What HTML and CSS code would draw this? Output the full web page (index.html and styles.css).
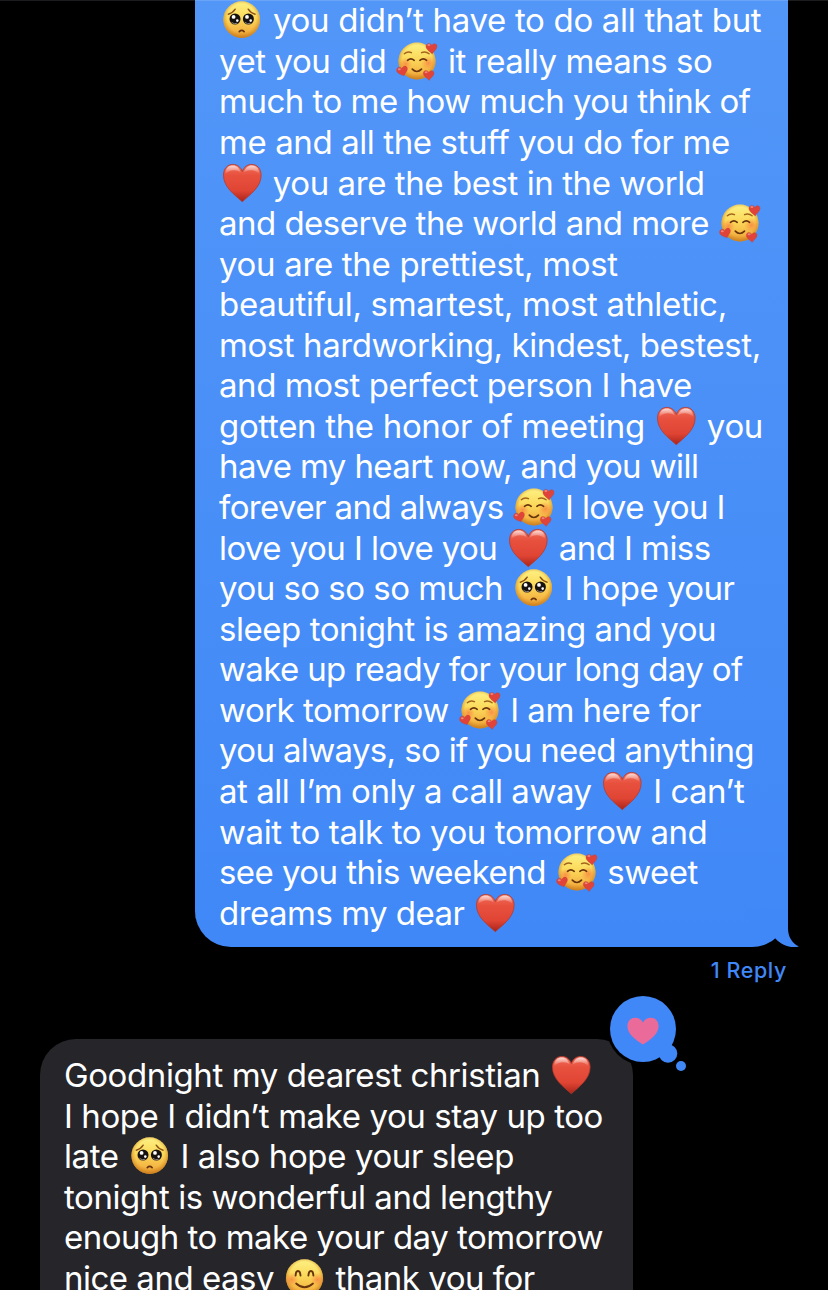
FILE: index.html
```
<!DOCTYPE html>
<html lang="en">
<head>
<meta charset="utf-8">
<title>Messages</title>
<link rel="stylesheet" href="styles.css">
</head>
<body>
<svg class="defs" aria-hidden="true">
  <defs>
    <linearGradient id="skin" x1="0" y1="0" x2="0" y2="1">
      <stop offset="0" stop-color="#fdf183"/><stop offset=".45" stop-color="#fbd95a"/><stop offset=".8" stop-color="#f5b644"/><stop offset="1" stop-color="#e2922c"/>
    </linearGradient>
    <radialGradient id="edge" cx=".5" cy=".46" r=".54">
      <stop offset=".72" stop-color="#d98a1e" stop-opacity="0"/><stop offset="1" stop-color="#c0761a" stop-opacity=".75"/>
    </radialGradient>
    <radialGradient id="blush"><stop offset="0" stop-color="#f9683c" stop-opacity=".6"/><stop offset="1" stop-color="#f9783c" stop-opacity="0"/></radialGradient>
    <linearGradient id="red" x1="0" y1="0" x2="0" y2="1">
      <stop offset="0" stop-color="#f0705a"/><stop offset=".3" stop-color="#e8503e"/><stop offset=".7" stop-color="#e04534"/><stop offset="1" stop-color="#a92419"/>
    </linearGradient>
    <linearGradient id="shine" x1="0" y1="0" x2="0" y2="1"><stop offset="0" stop-color="#fff" stop-opacity=".75"/><stop offset="1" stop-color="#fff" stop-opacity="0"/></linearGradient>
    <symbol id="heart" viewBox="0 0 44 40">
      <path d="M22.300 38.700C14.300 31.500 3.500 24 3.500 12.300C3.500 5.500 7.600 1.400 12.800 1.400C17.300 1.400 20.800 4 22.300 8.600C23.800 4 27.300 1.400 31.800 1.400C37 1.400 41.100 5.500 41.100 12.300C41.100 24 30.300 31.500 22.300 38.700Z" fill="url(#red)" stroke="#b5392c" stroke-width=".8"/>
      <path d="M5.300 11C5.300 5 8.800 2.500 12.800 2.500C16.800 2.500 19.300 5 20.800 9.500C16.300 6 9.300 6.500 5.300 11ZM39.300 11C39.300 5 35.800 2.500 31.800 2.500C27.800 2.500 25.300 5 23.800 9.500C28.300 6 35.300 6.500 39.300 11Z" fill="url(#shine)"/>
    </symbol>
    <symbol id="plead" viewBox="0 0 44 40">
      <circle cx="21.700" cy="19.600" r="18.300" fill="url(#skin)"/><circle cx="21.700" cy="19.600" r="18.300" fill="url(#edge)"/>
      <path d="M8.300 14.200Q12.500 13.300 15.200 9.200M35.100 14.200Q30.900 13.300 28.200 9.200" fill="none" stroke="#8a4f17" stroke-width="1.400" stroke-linecap="round"/>
      <circle cx="15" cy="19" r="5.500" fill="#17110f"/><circle cx="28.400" cy="19" r="5.500" fill="#17110f"/>
      <circle cx="13.600" cy="16.900" r="1.900" fill="#fff"/><circle cx="27" cy="16.900" r="1.900" fill="#fff"/>
      <circle cx="17.300" cy="20.600" r="1.300" fill="#fff"/><circle cx="30.700" cy="20.600" r="1.300" fill="#fff"/>
      <path d="M11.500 22.300Q14 24.700 17.300 23.200M24.900 22.300Q27.400 24.700 30.700 23.200" fill="none" stroke="#a7a09a" stroke-width=".8"/>
      <path d="M19.300 31.600Q21.700 29.300 24.100 31.600" fill="none" stroke="#67340e" stroke-width="1.700" stroke-linecap="round"/>
    </symbol>
    <symbol id="loved" viewBox="0 0 44 40">
      <circle cx="22" cy="20" r="18.500" fill="url(#skin)"/><circle cx="22" cy="20" r="18.500" fill="url(#edge)"/>
      <circle cx="10.500" cy="23" r="6.500" fill="url(#blush)"/><circle cx="33.500" cy="22" r="7.500" fill="url(#blush)"/>
      <path d="M9.300 12.800Q12.500 9.700 16.500 11.700M26.500 11.700Q30.500 9.700 34.100 12.800" fill="none" stroke="#a4661c" stroke-width="1.400" stroke-linecap="round"/>
      <path d="M12.500 19.300Q15.900 16.400 19.200 19.300M24.900 19.300Q28.300 16.400 31.600 19.300" fill="none" stroke="#67340e" stroke-width="1.700" stroke-linecap="round"/>
      <path d="M17.300 28.200Q21.800 32.800 26.500 28.200" fill="none" stroke="#67340e" stroke-width="1.700" stroke-linecap="round"/>
      <g fill="#e0433a" stroke="#c23a2a" stroke-width=".3">
        <path d="M37.200 13C34.500 10.200 30.600 8.200 31 4.900C31.600 1.900 35.400 1.400 36.900 4.500C38.600 1.500 42.200 2.600 42 5.600C41.800 8.400 38.900 10.200 37.200 13Z"/>
        <path d="M9 34.800C5.800 33.400 1.700 32.600 1.600 29.300C1.600 26.200 5 25 6.800 27.700C7.800 24.500 11.500 24.200 12.300 27.100C13 30 10.200 31.900 9 34.800Z"/>
        <path d="M34.300 39.400C31.700 36.600 28.200 35.100 28.300 31.900C28.600 28.800 32.400 28.500 33.800 31.500C35.500 28.600 39 29.300 39 32.300C39 35.200 35.700 36.600 34.300 39.400Z"/>
      </g>
      <g fill="#fff" opacity=".35"><ellipse cx="33.900" cy="4.100" rx="1.500" ry="1"/><ellipse cx="4.300" cy="28.200" rx="1.500" ry="1"/><ellipse cx="31.100" cy="31.200" rx="1.500" ry="1"/></g>
    </symbol>
    <symbol id="smile" viewBox="0 0 44 40">
      <circle cx="21.500" cy="19.800" r="18.500" fill="url(#skin)"/><circle cx="21.500" cy="19.800" r="18.500" fill="url(#edge)"/>
      <circle cx="8.500" cy="21.500" r="7" fill="url(#blush)"/><circle cx="34.500" cy="21.500" r="7" fill="url(#blush)"/>
      <path d="M12.600 17.500C12.900 11.500 17 11.500 17.500 17.500M25.400 17.500C25.900 11.500 30 11.500 30.400 17.500" fill="none" stroke="#67340e" stroke-width="1.900" stroke-linecap="round"/>
      <path d="M13.100 25.500Q21.500 33 30 25.500" fill="none" stroke="#67340e" stroke-width="1.700" stroke-linecap="round"/>
    </symbol>
  </defs>
</svg>
<main class="thread">
  <section class="bubble sent">
    <p><svg class="emoji"><use href="#plead"/></svg> you didn’t have to do all that but</p>
    <p>yet you did <svg class="emoji"><use href="#loved"/></svg> it really means so</p>
    <p>much to me how much you think of</p>
    <p>me and all the stuff you do for me</p>
    <p><svg class="emoji"><use href="#heart"/></svg> you are the best in the world</p>
    <p>and deserve the world and more <svg class="emoji"><use href="#loved"/></svg></p>
    <p>you are the prettiest, most</p>
    <p>beautiful, smartest, most athletic,</p>
    <p>most hardworking, kindest, bestest,</p>
    <p>and most perfect person I have</p>
    <p>gotten the honor of meeting <svg class="emoji"><use href="#heart"/></svg> you</p>
    <p>have my heart now, and you will</p>
    <p>forever and always <svg class="emoji"><use href="#loved"/></svg> I love you I</p>
    <p>love you I love you <svg class="emoji"><use href="#heart"/></svg> and I miss</p>
    <p>you so so so much <svg class="emoji"><use href="#plead"/></svg> I hope your</p>
    <p>sleep tonight is amazing and you</p>
    <p>wake up ready for your long day of</p>
    <p>work tomorrow <svg class="emoji"><use href="#loved"/></svg> I am here for</p>
    <p>you always, so if you need anything</p>
    <p>at all I’m only a call away <svg class="emoji"><use href="#heart"/></svg> I can’t</p>
    <p>wait to talk to you tomorrow and</p>
    <p>see you this weekend <svg class="emoji"><use href="#loved"/></svg> sweet</p>
    <p>dreams my dear <svg class="emoji"><use href="#heart"/></svg></p>
    <svg class="tail" viewBox="0 0 50 40"><path d="M0 0H38V18C38 27 42 33 49 36.600C40 38.500 31 35 25.500 28.500L0 20Z"/></svg>
  </section>
  <div class="reply">1 Reply</div>
  <section class="bubble received">
    <p>Goodnight my dearest christian <svg class="emoji"><use href="#heart"/></svg></p>
    <p>I hope I didn’t make you stay up too</p>
    <p>late <svg class="emoji"><use href="#plead"/></svg> I also hope your sleep</p>
    <p>tonight is wonderful and lengthy</p>
    <p>enough to make your day tomorrow</p>
    <p>nice and easy <svg class="emoji"><use href="#smile"/></svg> thank you for</p>
    <svg class="tapback" viewBox="0 0 82 82">
      <g class="halo"><circle cx="36" cy="36" r="36"/><circle cx="61" cy="60.500" r="12"/></g>
      <g class="cloud"><circle cx="36" cy="36" r="33"/><circle cx="61" cy="60.500" r="9.300"/><circle cx="74" cy="73" r="5"/></g>
      <path class="love" d="M36 51.600C30 47.500 20.400 41.500 20.400 33.200C20.400 28 23.800 24.700 28.200 24.700C31.800 24.700 34.500 26.600 36 29.500C37.500 26.600 40.200 24.700 43.800 24.700C48.200 24.700 51.600 28 51.600 33.200C51.600 41.500 42 47.500 36 51.600Z"/>
    </svg>
  </section>
</main>
</body>
</html>
```
FILE: styles.css
```
body {
  margin: 0;
  background: #000;
  color: #fff;
  font-family: Inter, "Liberation Sans", sans-serif;
}

.defs {
  position: absolute;
  width: 0;
  height: 0;
}

.thread {
  display: flex;
  flex-direction: column;
  box-sizing: border-box;
  height: 1290px;
  padding: 0 40px;
  overflow: hidden;
  box-shadow: inset 0 1px #1c1c1e;
}

.bubble {
  position: relative;
  flex: none;
  box-sizing: border-box;
  width: 593px;
  font-size: 33px;
  line-height: 40.57px;
}

.bubble p {
  height: 40.57px;
  margin: 0;
  white-space: nowrap;
  letter-spacing: -0.45px;
}

.sent {
  align-self: flex-end;
  height: 947px;
  padding: 0.3px 24px 0;
  border-radius: 0 0 36px 36px;
  background: linear-gradient(#5296f8, #4088f7);
  box-shadow: inset 0 1px #6aa4f8;
}

.received {
  height: 251px;
  margin-top: 54px;
  padding: 16px 24px 0;
  border-radius: 36px 36px 0 0;
  background: #26252a;
}

.emoji {
  width: 44px;
  height: 40px;
  vertical-align: top;
}

.emoji:first-child:not(:last-child) {
  margin-right: 0.3px;
}

.tail {
  position: absolute;
  right: -12px;
  bottom: -3px;
  width: 50px;
  height: 40px;
  fill: #4088f7;
}

.reply {
  align-self: flex-end;
  height: 26px;
  margin-top: 12px;
  padding-right: 1px;
  color: #4088f7;
  font-size: 21.5px;
  font-weight: 500;
  line-height: 23px;
  letter-spacing: 0.6px;
}

.received {
  margin-top: 54px;
}

.tapback {
  position: absolute;
  top: -46px;
  left: 567px;
  width: 82px;
  height: 82px;
}

.halo { fill: #000; }
.cloud { fill: #4088f7; }
.love { fill: #ea6a9a; }

.sent p:nth-child(1) { padding-left: 1px; letter-spacing: -0.31px; }
.sent p:nth-child(2) { letter-spacing: -0.44px; }
.sent p:nth-child(3) { letter-spacing: -0.509px; }
.sent p:nth-child(4) { letter-spacing: -0.4px; }
.sent p:nth-child(5) { padding-left: 1px; letter-spacing: -0.43px; }
.sent p:nth-child(6) { letter-spacing: -0.53px; }
.sent p:nth-child(7) { letter-spacing: -0.32px; }
.sent p:nth-child(8) { letter-spacing: -0.32px; }
.sent p:nth-child(9) { letter-spacing: -0.42px; }
.sent p:nth-child(10) { letter-spacing: -0.45px; }
.sent p:nth-child(11) { letter-spacing: -0.33px; }
.sent p:nth-child(12) { letter-spacing: -0.6px; }
.sent p:nth-child(13) { letter-spacing: -0.6px; }
.sent p:nth-child(14) { letter-spacing: -0.56px; }
.sent p:nth-child(15) { letter-spacing: -0.52px; }
.sent p:nth-child(16) { letter-spacing: -0.45px; }
.sent p:nth-child(17) { letter-spacing: -0.636px; }
.sent p:nth-child(18) { letter-spacing: -0.52px; }
.sent p:nth-child(19) { letter-spacing: -0.64px; }
.sent p:nth-child(20) { letter-spacing: -0.48px; }
.sent p:nth-child(21) { letter-spacing: -0.41px; }
.sent p:nth-child(22) { letter-spacing: -0.55px; }
.sent p:nth-child(23) { letter-spacing: -0.52px; }
.received p:nth-child(1) { letter-spacing: -0.4px; }
.received p:nth-child(2) { letter-spacing: -0.412px; }
.received p:nth-child(3) { letter-spacing: -0.393px; }
.received p:nth-child(4) { letter-spacing: -0.43px; }
.received p:nth-child(5) { letter-spacing: -0.497px; }
.received p:nth-child(6) { letter-spacing: -0.5px; }
```
